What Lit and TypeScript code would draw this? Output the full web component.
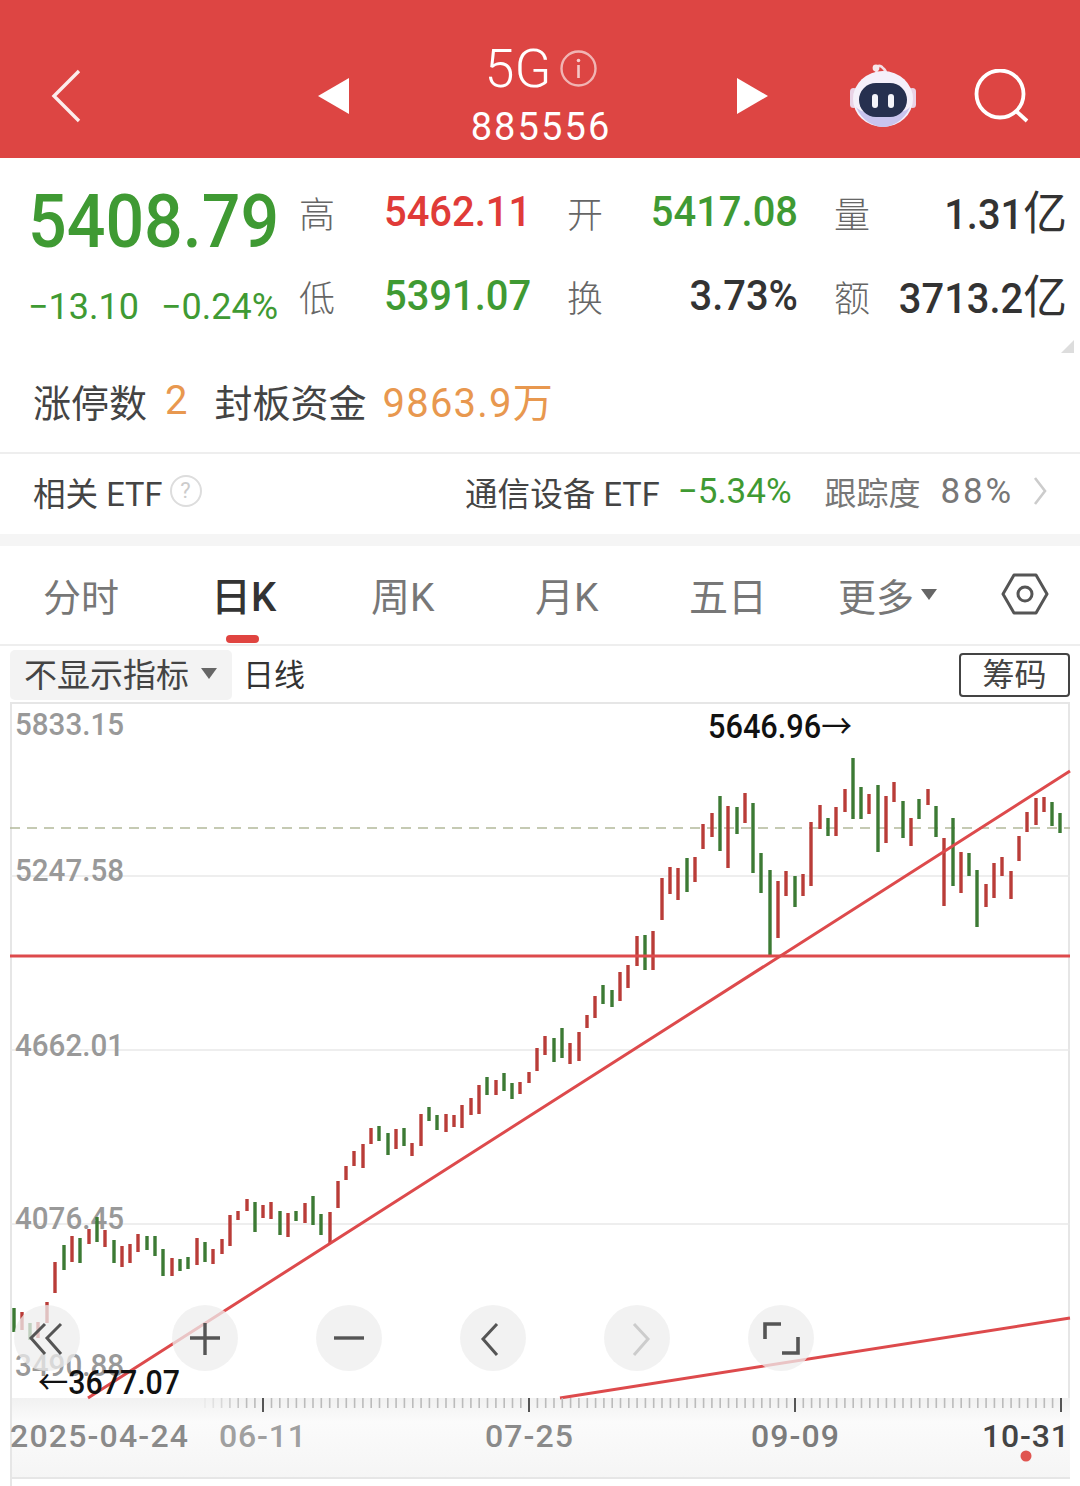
import { LitElement, html, css, svg } from "lit";
import { customElement } from "lit/decorators.js";

type Bar = [number, number, number, "r" | "g"];
const RED = "#b93c38";
const GREEN = "#3c7a34";
const bars: Bar[] = [
  [14,1308,1332,"g"],[22,1312,1330,"r"],[30,1323,1340,"g"],[38,1322,1338,"r"],[47,1302,1323,"r"],
  [55,1262,1293,"r"],[64,1245,1270,"g"],[72,1236,1262,"r"],[80,1238,1263,"g"],[89,1229,1244,"r"],
  [97,1217,1242,"g"],[105,1230,1247,"r"],[114,1240,1263,"g"],[122,1246,1267,"r"],[130,1244,1263,"r"],
  [138,1234,1252,"r"],[147,1236,1250,"g"],[155,1236,1256,"g"],[163,1249,1276,"g"],[172,1258,1276,"r"],
  [180,1259,1271,"g"],[188,1257,1269,"g"],[197,1238,1265,"r"],[205,1242,1262,"g"],[213,1249,1264,"r"],
  [222,1239,1254,"r"],[230,1215,1246,"r"],[238,1211,1220,"r"],[247,1199,1211,"r"],[255,1202,1232,"g"],
  [263,1205,1218,"r"],[271,1202,1219,"r"],[280,1211,1235,"g"],[288,1213,1237,"r"],[296,1211,1221,"g"],
  [305,1203,1223,"r"],[313,1196,1225,"g"],[321,1214,1235,"g"],[330,1212,1244,"r"],[338,1181,1208,"r"],
  [346,1166,1180,"r"],[354,1151,1166,"r"],[363,1144,1168,"r"],[371,1128,1144,"r"],[379,1126,1141,"g"],
  [388,1133,1155,"g"],[396,1129,1149,"r"],[404,1128,1146,"g"],[412,1143,1156,"r"],[421,1114,1146,"r"],
  [429,1107,1121,"g"],[437,1115,1130,"g"],[446,1114,1132,"r"],[454,1115,1127,"r"],[462,1105,1128,"r"],
  [471,1098,1115,"r"],[479,1085,1114,"r"],[487,1077,1095,"g"],[496,1080,1095,"r"],[504,1073,1091,"g"],
  [512,1083,1099,"g"],[520,1082,1094,"r"],[529,1072,1083,"r"],[537,1048,1071,"r"],[545,1036,1055,"r"],
  [554,1038,1062,"g"],[562,1028,1058,"g"],[570,1043,1064,"r"],[579,1032,1061,"r"],[587,1015,1028,"r"],
  [595,996,1018,"r"],[603,985,1004,"g"],[612,990,1007,"g"],[620,972,1001,"r"],[628,965,988,"r"],
  [637,936,966,"r"],[645,935,970,"g"],[653,931,970,"r"],[662,878,920,"r"],[670,867,894,"r"],
  [678,868,900,"r"],[687,858,892,"g"],[695,857,882,"r"],[703,824,849,"r"],[712,813,837,"r"],
  [720,796,851,"g"],[728,806,868,"r"],[737,807,834,"g"],[745,793,823,"r"],[753,803,873,"g"],
  [761,853,893,"g"],[770,870,956,"g"],[778,881,938,"r"],[786,871,896,"r"],[795,876,907,"g"],
  [803,874,896,"r"],[811,822,886,"r"],[820,805,829,"r"],[828,818,836,"g"],[836,807,836,"r"],
  [845,789,812,"r"],[853,758,819,"g"],[861,787,819,"g"],[869,794,814,"r"],[878,785,852,"g"],
  [886,796,843,"r"],[894,782,802,"r"],[903,801,838,"g"],[911,818,846,"r"],[919,799,819,"g"],
  [928,789,805,"r"],[936,806,837,"g"],[944,838,906,"r"],[953,818,886,"g"],[961,852,893,"r"],
  [969,853,876,"g"],[977,870,927,"g"],[986,884,907,"r"],[994,863,898,"r"],[1002,857,876,"r"],
  [1011,871,899,"r"],[1019,836,861,"r"],[1027,812,832,"r"],[1036,798,825,"r"],[1044,797,812,"r"],
  [1052,802,826,"g"],[1060,813,833,"g"],
];

const yLabels: [string, number][] = [
  ["5833.15", 735], ["5247.58", 881], ["4662.01", 1056], ["4076.45", 1229], ["3490.88", 1376],
];
const dates: [string, number, number, string][] = [
  ["2025-04-24", 10, 178, "#8a8a8a"], ["06-11", 219, 87, "#a0a0a0"], ["07-25", 485, 88, "#8a8a8a"],
  ["09-09", 751, 88, "#7c7c7c"], ["10-31", 982, 87, "#444"],
];
const minor: number[] = [];
for (let x = 205; x < 1062; x += 8.31) minor.push(x);

@customElement("app-root")
export class AppRoot extends LitElement {
  static styles = css`
    :host { display: block; width: 1080px; height: 1486px; overflow: hidden; background: #fff;
      font-family: Roboto, "Noto Sans CJK SC", sans-serif; color: #333; }
    .cjk { font-family: "Noto Sans CJK SC", sans-serif; }
    .nav { height: 158px; box-sizing: border-box; padding-top: 34px; background: #dd4543; display: grid; align-items: center; color: #fff;
      grid-template-columns: 50px 32px 236px 32px 382px 4px 32px 81px 68px 57px 56px 46px; }
    .nav svg { display: block; }
    .back { grid-column: 2; } .tl { grid-column: 4; } .center { grid-column: 5; }
    .tr { grid-column: 7; } .bot { grid-column: 9; } .search { grid-column: 11; grid-row: 1; }
    .back, .tl, .center, .tr, .bot { grid-row: 1; }
    .center { display: flex; flex-direction: column; align-items: center; }
    .title { display: flex; align-items: center; gap: 9px; height: 54px; margin-top: -2px; font-size: 54px; font-weight: 300; }
    .code { font-size: 38px; line-height: 44px; letter-spacing: 2.1px; margin-top: 10px; }

    .quote { height: 194px; padding-left: 27px; display: flex; position: relative; box-sizing: border-box; }
    .main { width: 271px; padding: 22px 0 0 1px; }
    .big { font-size: 74px; line-height: 84px; font-weight: 500; color: #3f9a33; transform: scaleX(.92);
      transform-origin: left; white-space: nowrap; }
    .chg { display: flex; gap: 22px; margin-top: 21px; font-size: 36px; line-height: 44px; color: #3f9a33; }
    .stats { display: grid; grid-template-columns: 85px 183px 36px 195px 36px 36px 197px;
      grid-template-rows: 84px 84px; padding-top: 12px; align-items: center; }
    .lab { font-size: 36px; color: #666; line-height: 84px; font-family: "Noto Sans CJK SC", sans-serif; font-weight: 300; }
    .val { font-size: 42px; font-weight: 500; white-space: nowrap; line-height: 84px; transform: scaleX(.95); transform-origin: left; }
    .right { text-align: right; transform-origin: right; }
    .red { color: #e03b38; } .green { color: #3f9a33; } .dark { color: #333; }
    .val .cjk { font-weight: 400; font-size: 46px; }
    .corner { position: absolute; right: 6px; bottom: 0; width: 0; height: 0; border-left: 13px solid transparent;
      border-bottom: 13px solid #ddd; margin-bottom: -1px; }

    .limit { height: 102px; box-sizing: border-box; border-bottom: 2px solid #eee; display: flex; align-items: center;
      padding: 0 0 4px 33px; font-size: 38px; color: #444; font-family: "Noto Sans CJK SC", sans-serif; font-weight: 400; }
    .orange { color: #e8984f; font-family: Roboto, "Noto Sans CJK SC", sans-serif; font-weight: 400; }
    .limit .n2 { font-size: 40px; margin: 0 27px 0 18px; }
    .limit .amt { margin-left: 16px; font-size: 40px; letter-spacing: 1.2px; }

    .etf { height: 80px; box-sizing: border-box; padding: 0 0 6px 33px; display: flex; align-items: center; font-size: 32.6px; color: #444;
      font-weight: 400; }
    .etf .q { width: 28px; height: 28px; margin-left: 7px; border: 2px solid #ddd; border-radius: 50%; color: #ccc;
      font-size: 22px; line-height: 28px; text-align: center; }
    .etf .sp { flex: 1; }
    .etf .pct { color: #3f9a33; margin-left: 18px; font-size: 35px; font-weight: 400; }
    .etf .tr2 { color: #777; margin-left: 33px; font-size: 32px; }
    .etf .tv { color: #777; margin-left: 20px; font-size: 35px; letter-spacing: 2.8px; }
    .etf svg { margin: 0 33px 0 19px; display: block; }
    .gap { height: 12px; background: #f5f5f5; }

    .tabs { height: 100px; box-sizing: border-box; padding-bottom: 2px; border-bottom: 2px solid #eee; position: relative; display: grid;
      grid-template-columns: 43px 171px 158px 164px 154px 148px 163px 79px; align-items: center;
      font-size: 38px; color: #777; font-weight: 400; }
    .tabs > :first-child { grid-column: 2; }
    .tab.k { font-size: 39px; margin-left: -1px; }
    .tab.on { color: #333; font-weight: 500; position: relative; font-size: 40px; margin-left: -3px; }
    .tab.on::after { content: ""; position: absolute; left: 15px; width: 33px; height: 8px; top: 70px; background: #e04440; border-radius: 4px; }
    .more { display: flex; align-items: center; gap: 7px; }
    .tri { width: 0; height: 0; border-left: 8.5px solid transparent; border-right: 8.5px solid transparent;
      border-top: 11px solid #666; }

    .ind { height: 56px; box-sizing: border-box; padding: 2px 10px 0; display: flex; align-items: center; }
    .btn { width: 222px; height: 50px; box-sizing: border-box; padding: 0 0 4px 14px; background: #f3f3f3; border-radius: 5px;
      display: flex; align-items: center; font-size: 33px; color: #444; gap: 12px; font-weight: 400; }
    .day { margin: 0 0 5px 11px; font-size: 31px; color: #333; flex: 1; font-weight: 400; }
    .chips { width: 111px; height: 44px; box-sizing: border-box; border: 2px solid #444; border-radius: 4px; font-size: 32px;
      text-align: center; line-height: 40px; color: #444; font-weight: 400; }
    .chart { display: block; width: 1080px; height: 784px; }
    .chart text { font-family: Roboto, "Noto Sans CJK SC", sans-serif; font-weight: 500; }
    .chart .arrow { font-family: "Noto Sans CJK SC", sans-serif; font-weight: 400; }
  `;

  render() {
    return html`
      <div class="nav">
        <svg class="back" width="32" height="54" viewBox="0 0 32 54"><path d="M29 2 4 27l25 25" fill="none" stroke="#fff" stroke-width="3.4" opacity=".9"/></svg>
        <svg class="tl" width="32" height="36" viewBox="0 0 32 36"><path d="M31 0v36L0 18z" fill="#fff"/></svg>
        <div class="center">
          <div class="title">5G
            <svg width="37" height="37" viewBox="0 0 37 37"><circle cx="18.5" cy="18.5" r="17" fill="none" stroke="#fff" stroke-opacity=".6" stroke-width="2.4"/><path d="M18.5 15v13" stroke="#fff" stroke-opacity=".7" stroke-width="2.6"/><circle cx="18.5" cy="10.5" r="1.8" fill="#fff" fill-opacity=".75"/></svg>
          </div>
          <div class="code">885556</div>
        </div>
        <svg class="tr" width="32" height="36" viewBox="0 0 32 36"><path d="M1 0v36l31-18z" fill="#fff"/></svg>
        <svg class="bot" width="68" height="66" viewBox="0 0 68 66">
          <path d="M28 9c-3-4 2-8 5-5 1 2 4 2 4 7" fill="none" stroke="#f3dfe6" stroke-width="2.6"/>
          <circle cx="27" cy="5" r="3.4" fill="#f6e6ea"/>
          <rect x="1" y="25" width="7" height="20" rx="3.5" fill="#e9d3e6"/><rect x="60" y="25" width="7" height="20" rx="3.5" fill="#e9d3e6"/>
          <ellipse cx="34" cy="36" rx="30" ry="28" fill="#f5f0fa"/>
          <path d="M7 44c6 14 18 20 27 20s21-6 27-20c-8 10-46 10-54 0z" fill="#c9c4ee"/>
          <rect x="10" y="20" width="48" height="34" rx="17" fill="#26304f"/>
          <rect x="23" y="31" width="6" height="14" rx="3" fill="#f4f4fa"/><rect x="39" y="31" width="6" height="14" rx="3" fill="#f4f4fa"/>
        </svg>
        <svg class="search" width="56" height="54" viewBox="0 0 56 54"><circle cx="26" cy="25" r="23.5" fill="none" stroke="#fff" stroke-width="3.8"/><path d="M42 42l11 10" stroke="#fff" stroke-width="3.8"/></svg>
      </div>

      <div class="quote">
        <div class="main">
          <div class="big">5408.79</div>
          <div class="chg"><span>−13.10</span><span>−0.24%</span></div>
        </div>
        <div class="stats">
          <div class="lab">高</div><div class="val red">5462.11</div>
          <div class="lab">开</div><div class="val green right">5417.08</div><div></div>
          <div class="lab">量</div><div class="val dark right">1.31<span class="cjk">亿</span></div>
          <div class="lab">低</div><div class="val green">5391.07</div>
          <div class="lab">换</div><div class="val dark right">3.73%</div><div></div>
          <div class="lab">额</div><div class="val dark right">3713.2<span class="cjk">亿</span></div>
        </div>
        <div class="corner"></div>
      </div>

      <div class="limit">
        <span>涨停数</span><span class="orange n2">2</span><span>封板资金</span><span class="orange amt">9863.9万</span>
      </div>

      <div class="etf">
        <span>相关 ETF</span><span class="q">?</span><span class="sp"></span>
        <span>通信设备 ETF</span><span class="pct">−5.34%</span><span class="tr2">跟踪度</span><span class="tv">88%</span>
        <svg width="14" height="28" viewBox="0 0 14 28"><path d="M2 1l10 13L2 27" fill="none" stroke="#ccc" stroke-width="2.6"/></svg>
      </div>
      <div class="gap"></div>

      <div class="tabs">
        <span class="tab">分时</span><span class="tab k on">日K</span><span class="tab k">周K</span><span class="tab k">月K</span><span class="tab k">五日</span>
        <span class="tab more">更多<i class="tri"></i></span>
        <svg width="48" height="44" viewBox="0 0 48 44"><path d="M13 3h22l11 19-11 19H13L2 22z" fill="none" stroke="#555" stroke-width="3" stroke-linejoin="round"/><circle cx="24" cy="22" r="7" fill="none" stroke="#555" stroke-width="3"/></svg>
      </div>

      <div class="ind">
        <div class="btn">不显示指标<i class="tri"></i></div>
        <div class="day">日线</div>
        <div class="chips">筹码</div>
      </div>

      ${this.renderChart()}
    `;
  }

  renderChart() {
    const circles = [47, 205, 349, 493, 637, 781];
    return svg`
      <svg class="chart" viewBox="0 702 1080 784" xmlns="http://www.w3.org/2000/svg">
        <defs>
          <linearGradient id="ax" x1="0" y1="0" x2="0" y2="1">
            <stop offset="0" stop-color="#f1f1f1"/><stop offset=".3" stop-color="#fbfbfb"/><stop offset="1" stop-color="#f5f5f5"/>
          </linearGradient>
        </defs>
        <rect x="10" y="1398" width="1060" height="80" fill="url(#ax)"/>
        <path d="M11 703V1486M1069 703V1398M10 703H1070M10 1478H1070" fill="none" stroke="#e6e6e6" stroke-width="2"/>
        <path d="M10 876H1070M10 1050H1070M10 1224H1070" stroke="#e9e9e9" stroke-width="1.5"/>
        <path d="M10 828H1070" stroke="#b3b99a" stroke-width="1.5" stroke-dasharray="10 7"/>
        ${yLabels.map(([t, y]) => svg`<text x="15" y=${y} font-size="32" fill="#999" textLength="109" lengthAdjust="spacingAndGlyphs">${t}</text>`)}
        ${bars.map(([x, a, b, c]) => svg`<rect x=${x - 1.7} y=${a} width="3.4" height=${b - a} fill=${c === "r" ? RED : GREEN}/>`)}
        <path d="M10 956H1070" stroke="#dd4a4c" stroke-width="3"/>
        <path d="M88 1398 1070 771M560 1398 1070 1318" fill="none" stroke="#dd4a4c" stroke-width="3"/>
        ${circles.map((x) => svg`<circle cx=${x} cy="1338" r="33" fill="#eee" fill-opacity=".75"/>`)}
        <path d="M45 1324 31 1338l14 16M61 1324 47 1338l14 16" fill="none" stroke="#555" stroke-width="3"/>
        <path d="M190 1338h30M205 1323v32" fill="none" stroke="#555" stroke-width="3.4"/>
        <path d="M334 1338h30" fill="none" stroke="#555" stroke-width="3.4"/>
        <path d="M497 1324 483 1339l14 16" fill="none" stroke="#555" stroke-width="3"/>
        <path d="M634 1324 648 1339l-14 16" fill="none" stroke="#ccc" stroke-width="3"/>
        <path d="M765 1339v-15h16M798 1337v16h-16" fill="none" stroke="#555" stroke-width="3.6"/>
        <text x="708" y="738" font-size="33" fill="#111" textLength="144" lengthAdjust="spacingAndGlyphs">5646.96<tspan class="arrow">→</tspan></text>
        <text x="38" y="1394" font-size="33" fill="#111" textLength="142" lengthAdjust="spacingAndGlyphs"><tspan class="arrow">←</tspan>3677.07</text>
        ${minor.map((x, i) => svg`<path d=${`M${x.toFixed(1)} 1398v10`} stroke="#bbb" stroke-width="1.6" opacity=${Math.min(1, i / 6 + 0.15).toFixed(2)}/>`)}
        ${[263, 529, 795, 1061].map((x) => svg`<path d=${`M${x} 1398v14`} stroke="#555" stroke-width="2"/>`)}
        ${dates.map(([t, x, w, c]) => svg`<text x=${x} y="1447" font-size="32" fill=${c} textLength=${w}>${t}</text>`)}
        <circle cx="1026" cy="1456" r="5.5" fill="#e05550"/>
      </svg>
    `;
  }
}
